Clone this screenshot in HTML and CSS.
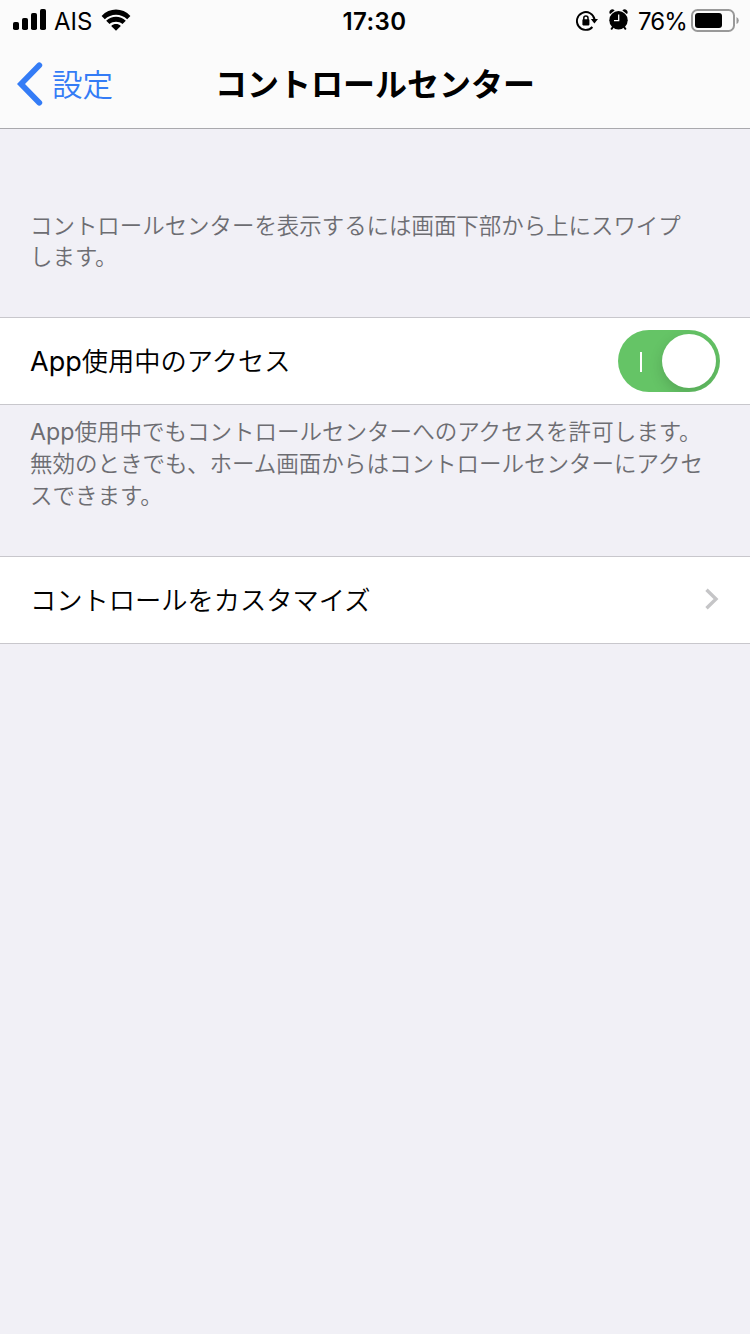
FILE: index.html
```html
<!DOCTYPE html>
<html lang="ja">
<head>
    <meta charset="UTF-8">
    <meta name="viewport" content="width=device-width, initial-scale=1.0">
    <title>コントロールセンター</title>
    <link rel="stylesheet" href="styles.css">
</head>
<body>
    <header class="header">
        <div class="status-bar">
            <div class="status-left">
                <svg class="signal" width="34" height="22" viewBox="0 0 34 22">
                    <rect x="0" y="13" width="6" height="8" rx="1.8"/>
                    <rect x="9" y="9" width="6" height="12" rx="1.8"/>
                    <rect x="18" y="4" width="6" height="17" rx="1.8"/>
                    <rect x="27" y="0" width="6" height="21" rx="1.8"/>
                </svg>
                <span class="carrier">AIS</span>
                <svg class="wifi" width="30" height="22" viewBox="0 0 30 22">
                    <path d="M0.6 6.9 C8.6 -1.6 21.4 -1.6 29.4 6.9 L26.2 10.2 C20 4.2 10 4.2 3.8 10.2 Z"/>
                    <path d="M5.2 11.7 C10.7 6.5 19.3 6.5 24.8 11.7 L21.5 15 C18 11.9 12 11.9 8.5 15 Z"/>
                    <path d="M10.2 16.9 C12.9 14.4 17.1 14.4 19.8 16.9 L15 21.8 Z"/>
                </svg>
            </div>
            <span class="time">17:30</span>
            <div class="status-right">
                <svg class="lock" width="22" height="22" viewBox="0 0 22 22">
                    <path d="M16.4 17 A8.9 8.9 0 1 1 18.6 9.5" fill="none" stroke="#000" stroke-width="1.9"/>
                    <path d="M14.8 9 H22 L18.4 13.4 Z"/>
                    <rect x="6.4" y="9.2" width="7" height="6.2" rx="0.8"/>
                    <path d="M7.8 10.2 V8 A2.1 2.1 0 0 1 12 8 V10.2" fill="none" stroke="#000" stroke-width="1.5"/>
                </svg>
                <svg class="alarm" width="20" height="22" viewBox="0 0 20 22">
                    <circle cx="9.5" cy="11.2" r="9.2"/>
                    <path d="M0.6 4.4 A3 3 0 0 1 5 0.8 L5.6 1.4 L1.2 5 Z"/>
                    <path d="M18.4 4.4 A3 3 0 0 0 14 0.8 L13.4 1.4 L17.8 5 Z"/>
                    <path d="M4 18 L2.6 19.8 M15 18 L16.4 19.8" stroke="#000" stroke-width="2" stroke-linecap="round"/>
                    <path d="M9.7 5.4 V11.7 H5" fill="none" stroke="#fff" stroke-width="1.3"/>
                </svg>
                <span class="percent">76%</span>
                <svg class="battery" width="48" height="24" viewBox="0 0 48 24">
                    <rect x="1" y="1" width="42" height="21" rx="5.5" fill="none" stroke="#999" stroke-width="2"/>
                    <rect x="4" y="4" width="27" height="15" rx="3"/>
                    <path d="M45.5 8 Q47.8 9 47.8 11.5 Q47.8 14 45.5 15 Z" fill="#999"/>
                </svg>
            </div>
        </div>
        <nav class="nav">
            <a class="back">
                <svg width="26" height="44" viewBox="0 0 26 44">
                    <path d="M22.3 3.3 L4 22 L22.3 40.7" fill="none" stroke="#347cf6" stroke-width="5.8" stroke-linecap="round" stroke-linejoin="miter"/>
                </svg>
                <span class="back-text">設定</span>
            </a>
            <h1 class="title">コントロールセンター</h1>
        </nav>
    </header>

    <main>
        <p class="note note-top">コントロールセンターを表示するには画面下部から上にスワイプ<br>します。</p>

        <div class="row">
            <span class="label"><span class="latin">App</span>使用中のアクセス</span>
            <div class="switch">
                <div class="switch-mark"></div>
                <div class="switch-knob"></div>
            </div>
        </div>

        <p class="note note-access"><span class="latin">App</span>使用中でもコントロールセンターへのアクセスを許可します。<br>無効のときでも、ホーム画面からはコントロールセンターにアクセ<br>スできます。</p>

        <div class="row">
            <span class="label">コントロールをカスタマイズ</span>
            <svg class="chevron" width="14" height="22" viewBox="0 0 14 22">
                <path d="M1.5 1.8 L11 11 L1.5 20.2" fill="none" stroke="#c5c5c7" stroke-width="3.4"/>
            </svg>
        </div>
    </main>
</body>
</html>
```

FILE: styles.css
```css
* {
    box-sizing: border-box;
}

body {
    margin: 0;
    min-height: 1334px;
    background-color: #f1f0f6;
    color: #000;
    font-family: Inter, "Noto Sans CJK JP", sans-serif;
}

.header {
    height: 129px;
    background-color: #fbfbfb;
    border-bottom: 1px solid #a9a9ad;
}

.status-bar {
    display: grid;
    grid-template-columns: 1fr auto 1fr;
    height: 40px;
    padding: 0 11px 0 13px;
    align-items: center;
    font-size: 24px;
    line-height: 40px;
}

.status-left,
.status-right {
    display: flex;
    align-items: center;
}

.status-left svg {
    margin-bottom: 2px;
}

.status-right {
    justify-content: flex-end;
}

.carrier {
    padding-top: 2px;
    margin-left: 7px;
    margin-right: 9px;
}

.time {
    padding-top: 2px;
    margin-right: 3px;
    font-weight: 600;
    letter-spacing: 0.4px;
}

.alarm {
    margin-left: 11px;
    margin-right: 9px;
    margin-bottom: 2px;
}

.percent {
    padding-top: 2px;
    letter-spacing: -0.9px;
}

.battery {
    margin-left: 4px;
    margin-bottom: 1px;
}

.nav {
    display: grid;
    grid-template-columns: 1fr auto 1fr;
    align-items: center;
    height: 88px;
}

.back {
    display: flex;
    align-items: center;
    gap: 9px;
    padding-left: 17px;
    color: #347cf6;
    font-size: 30.5px;
    font-weight: 350;
    line-height: 40px;
}

.back-text {
    padding-top: 2px;
}

.title {
    margin: 0;
    padding-top: 2px;
    font-size: 32px;
    font-weight: 700;
    line-height: 40px;
}

.note {
    margin: 0;
    padding: 0 30px;
    color: #6d6d72;
    font-size: 22.45px;
    font-weight: 350;
    line-height: 31.3px;
    white-space: nowrap;
}

.note-top {
    height: 188px;
    padding-top: 81px;
}

.note-access {
    height: 151px;
    padding-top: 11px;
    font-size: 22.53px;
}

.latin {
    font-size: 1.03em;
    font-weight: 400;
}

.row {
    display: flex;
    align-items: center;
    justify-content: space-between;
    height: 88px;
    padding: 0 30px;
    background-color: #fff;
    border-top: 1px solid #c8c7cc;
    border-bottom: 1px solid #c8c7cc;
}

.label {
    padding-top: 2px;
    font-size: 26.25px;
    font-weight: 350;
    line-height: 40px;
}

.switch {
    display: flex;
    align-items: center;
    justify-content: space-between;
    width: 102px;
    height: 62px;
    padding: 0 4px 0 22px;
    border-radius: 31px;
    background-color: #65c466;
    overflow: hidden;
}

.switch-mark {
    width: 2px;
    height: 20px;
    margin-top: 2px;
    background-color: #fff;
}

.switch-knob {
    width: 54px;
    height: 54px;
    border-radius: 50%;
    background-color: #fff;
    box-shadow: 0 5px 14px rgba(0, 0, 0, 0.15);
}

.chevron {
    margin-right: 1px;
    margin-bottom: 2px;
}
```
